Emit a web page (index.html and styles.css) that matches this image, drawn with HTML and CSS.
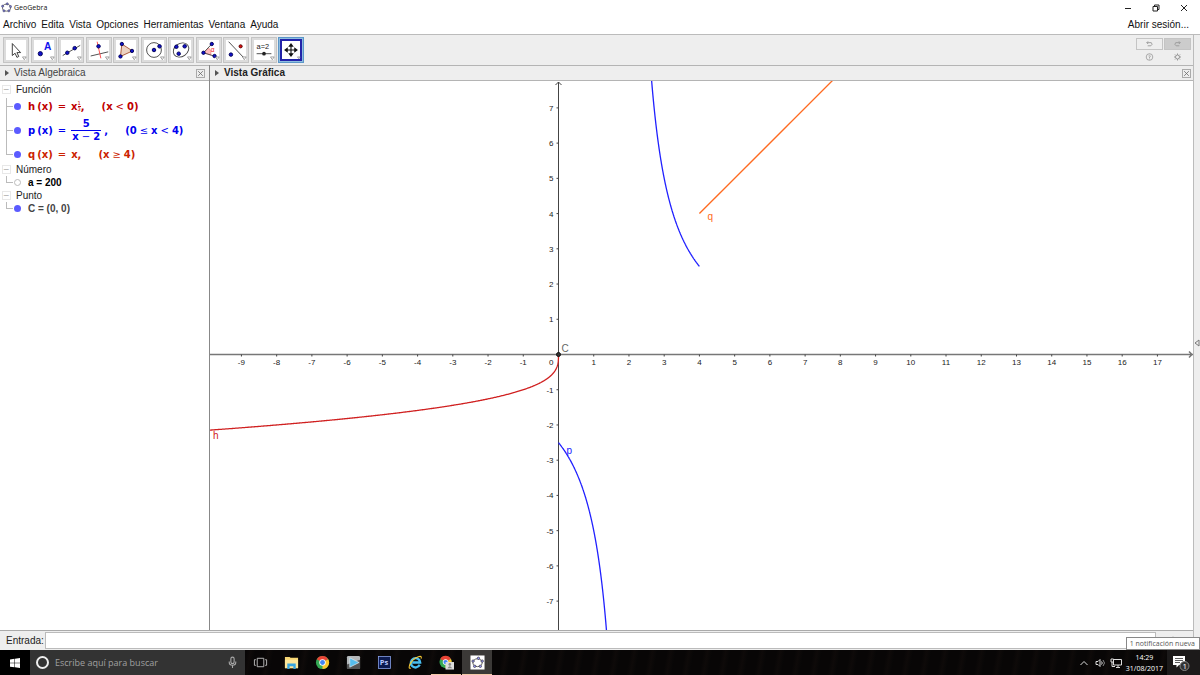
FILE: index.html
```html
<!DOCTYPE html>
<html lang="es">
<head>
  <meta charset="UTF-8">
  <title>GeoGebra</title>
  <link rel="stylesheet" href="styles.css">
</head>
<body>
  <header class="titulo">
    <svg class="logo" viewBox="0 0 12 12">
      <ellipse cx="6" cy="6.2" rx="4.4" ry="3.8" fill="none" stroke="#666"/>
      <g fill="#77c" stroke="#335" stroke-width=".5"><circle cx="6.8" cy="2" r="1.2"/><circle cx="1.8" cy="4.6" r="1.2"/><circle cx="3.2" cy="9.6" r="1.2"/><circle cx="8.6" cy="9.6" r="1.2"/><circle cx="10.4" cy="5" r="1.2"/></g>
    </svg>
    <span>GeoGebra</span>
    <div class="ventana">
      <button aria-label="Minimizar"><svg viewBox="0 0 8 8"><path d="M1 4.5h6"/></svg></button>
      <button aria-label="Restaurar"><svg viewBox="0 0 8 8"><path d="M1 2.5h4.5V7H1zM2.5 2.5V1H7v4.5H5.5"/></svg></button>
      <button aria-label="Cerrar"><svg viewBox="0 0 8 8"><path d="M1 1l6 6M7 1L1 7"/></svg></button>
    </div>
  </header>

  <nav class="menu">
    <a href="#">Archivo</a>
    <a href="#">Edita</a>
    <a href="#">Vista</a>
    <a href="#">Opciones</a>
    <a href="#">Herramientas</a>
    <a href="#">Ventana</a>
    <a href="#">Ayuda</a>
    <a href="#" class="sesion">Abrir sesión...</a>
  </nav>

  <div class="cuerpo">
    <main>
      <div class="barra">
        <div class="herramientas">
          <button aria-label="Elige y mueve"><svg viewBox="0 0 26 26"><path d="M9 6v13l3-2.500 2 4.500 2-1-2-4.200h4z" fill="#fff" stroke="#333"/><path class="mas" d="M20 20.500h4l-2 3z"/></svg></button>
          <button aria-label="Punto"><svg viewBox="0 0 26 26"><circle class="pt" cx="9" cy="17" r="2.300"/><text x="13" y="13" class="letra">A</text><path class="mas" d="M20 20.500h4l-2 3z"/></svg></button>
          <button aria-label="Recta"><svg viewBox="0 0 26 26"><path class="ln" d="M4 19L23 8"/><circle class="pt" cx="9" cy="16" r="1.900"/><circle class="pt" cx="17" cy="11" r="1.900"/><path class="mas" d="M20 20.500h4l-2 3z"/></svg></button>
          <button aria-label="Perpendicular"><svg viewBox="0 0 26 26"><path class="ln" d="M4 19.500L23 15"/><path d="M11 4l4 18" stroke="#f44"/><circle class="pt" cx="12.500" cy="9" r="1.900"/><path class="mas" d="M20 20.500h4l-2 3z"/></svg></button>
          <button aria-label="Polígono"><svg viewBox="0 0 26 26"><path d="M8.500 6.500L20 14 7 20z" fill="#ecd2c2" stroke="#a65332"/><circle class="pt" cx="8.500" cy="6.500" r="1.800"/><circle class="pt" cx="19.500" cy="14" r="1.800"/><circle class="pt" cx="7" cy="20" r="1.800"/><path class="mas" d="M20 20.500h4l-2 3z"/></svg></button>
          <button aria-label="Circunferencia"><svg viewBox="0 0 26 26"><circle cx="13" cy="13" r="8" class="ln"/><circle class="pt" cx="13" cy="13" r="1.900"/><circle class="pt" cx="19" cy="9" r="1.900"/><path class="mas" d="M20 20.500h4l-2 3z"/></svg></button>
          <button aria-label="Elipse"><svg viewBox="0 0 26 26"><ellipse cx="13" cy="13" rx="9" ry="7" transform="rotate(-35 13 13)" class="ln"/><circle class="pt" cx="8" cy="9.500" r="1.900"/><circle class="pt" cx="17" cy="9" r="1.900"/><circle class="pt" cx="10.500" cy="17" r="1.900"/><path class="mas" d="M20 20.500h4l-2 3z"/></svg></button>
          <button aria-label="Ángulo"><svg viewBox="0 0 26 26"><path d="M7 16l6-5a8 8 0 0 1 2 7.500z" fill="#fbb" stroke="#e66" stroke-width=".500"/><path class="ln" d="M16 6.500L7 16l13 4"/><text x="15" y="15" class="alfa">α</text><circle class="pt" cx="16" cy="6.500" r="1.800"/><circle class="pt" cx="7" cy="16" r="1.800"/><circle class="pt" cx="19" cy="19.500" r="1.800"/><path class="mas" d="M20 20.500h4l-2 3z"/></svg></button>
          <button aria-label="Simetría"><svg viewBox="0 0 26 26"><path class="ln" d="M5 4l17 18"/><circle class="pt" cx="7.500" cy="18" r="1.900"/><circle cx="18" cy="9" r="1.700" fill="#d11" stroke="#500"/><path class="mas" d="M20 20.500h4l-2 3z"/></svg></button>
          <button aria-label="Deslizador"><svg viewBox="0 0 26 26"><text x="5" y="12" class="valor">a=2</text><path class="ln" d="M5 17h16"/><circle cx="13" cy="17" r="2" fill="#222"/><path class="mas" d="M20 20.500h4l-2 3z"/></svg></button>
          <button class="activa" aria-label="Desplaza vista gráfica"><svg viewBox="0 0 26 26"><path d="M13 8v10M8 13h10" stroke="#111" stroke-width="1.200"/><path d="M13 5.500l3 4h-6zM13 20.500l3-4h-6zM5.500 13l4-3v6zM20.500 13l-4-3v6z" fill="#111"/><path class="mas" d="M20 20.500h3l-1.500 2z"/></svg></button>
        </div>
        <div class="acciones">
          <button aria-label="Deshace"><svg viewBox="0 0 10 8"><path d="M3.500 1L2 2.500 3.500 4M2 2.500h5q2 2-.500 3.500H3"/></svg></button>
          <button class="gris" aria-label="Rehace"><svg viewBox="0 0 10 8"><path d="M6.500 1L8 2.500 6.500 4M8 2.500H3q-2 2 .500 3.500H7"/></svg></button>
          <button class="plano" aria-label="Ayuda"><svg viewBox="0 0 8 8"><circle cx="4" cy="4" r="3.300" stroke-width=".800"/><path d="M3 3q1-1.500 2 0L4 4v1M4 5.500v1" stroke-width=".800"/></svg></button>
          <button class="plano" aria-label="Preferencias"><svg viewBox="0 0 8 8"><circle cx="4" cy="4" r="2"/><path d="M4 .500v1.500M4 6v1.500M.500 4H2M6 4h1.500M1.500 1.500l1 1M5.500 5.500l1 1M6.500 1.500l-1 1M2.500 5.500l-1 1"/></svg></button>
        </div>
      </div>

      <div class="vistas">
        <section class="algebra">
          <h2 class="cabecera"><span class="flecha"></span>Vista Algebraica
            <button class="cerrar" aria-label="Cerrar"><svg viewBox="0 0 9 9"><path d="M1.500 1.500l6 6M7.500 1.500l-6 6"/></svg></button>
          </h2>
          <ul class="arbol">
            <li><div class="grupo"><button aria-label="Contraer">−</button>Función</div>
              <ul>
                <li class="f h"><button class="bola" aria-label="Mostrar h"></button>
                  <span class="mat"><b>h<i></i>(x)</b><span class="op">=</span><b>x</b><span class="exp"><span>1</span><span>3</span></span><b>,</b></span>
                  <span class="cond"><b>(x</b><span>&lt;</span><b>0)</b></span></li>
                <li class="f p"><button class="bola" aria-label="Mostrar p"></button>
                  <span class="mat"><b>p<i></i>(x)</b><span class="op">=</span><span class="frac"><b>5</b><span><b>x</b> − <b>2</b></span></span><b>,</b></span>
                  <span class="cond"><b>(0</b><span>≤</span><b>x</b><span>&lt;</span><b>4)</b></span></li>
                <li class="f q"><button class="bola" aria-label="Mostrar q"></button>
                  <span class="mat"><b>q<i></i>(x)</b><span class="op">=</span><b>x,</b></span>
                  <span class="cond"><b>(x</b><span>≥</span><b>4)</b></span></li>
              </ul>
            </li>
            <li><div class="grupo"><button aria-label="Contraer">−</button>Número</div>
              <ul><li class="n"><button class="bola vacia" aria-label="Mostrar a"></button><b>a = 200</b></li></ul>
            </li>
            <li><div class="grupo"><button aria-label="Contraer">−</button>Punto</div>
              <ul><li class="n c"><button class="bola" aria-label="Mostrar C"></button><b>C = (0, 0)</b></li></ul>
            </li>
          </ul>
        </section>

        <section class="grafica">
          <h2 class="cabecera"><span class="flecha"></span><b>Vista Gráfica</b>
            <button class="cerrar" aria-label="Cerrar"><svg viewBox="0 0 9 9"><path d="M1.500 1.500l6 6M7.500 1.500l-6 6"/></svg></button>
          </h2>
          <div class="lienzo"><svg id="plano"></svg></div>
        </section>
      </div>

      <div class="entrada">
        <label for="entrada">Entrada:</label>
        <input type="text" id="entrada">
        <svg viewBox="0 0 10 10"><circle cx="5" cy="5" r="4"/></svg>
      </div>
    </main>
    <aside><button aria-label="Mostrar panel"><svg viewBox="0 0 6 8"><path d="M5 1v6L1 4z"/></svg></button></aside>
  </div>

  <footer class="tareas">
    <button class="inicio" aria-label="Inicio"><svg viewBox="0 0 12 12"><path d="M1 2.500l4.500-.700v4H1zM6 1.700l5-.700v4.800H6zM1 6.300h4.500v4L1 9.700zM6 6.300h5V11l-5-.700z" fill="#fff"/></svg></button>
    <div class="buscar">
      <span class="cortana"></span>
      <input type="text" aria-label="Buscar" placeholder="Escribe aquí para buscar">
      <svg viewBox="0 0 8 12"><rect x="2.500" y="1" width="3" height="6" rx="1.500"/><path d="M1 5v1q0 2.500 3 2.500T7 6V5M4 8.500V11"/></svg>
    </div>
    <div class="apps">
      <button aria-label="Vista de tareas"><svg viewBox="0 0 16 16"><path d="M4.500 3.500h7v9h-7zM3 5H1.500v6H3M13 5h1.500v6H13" fill="none" stroke="#bbb"/></svg></button>
      <button aria-label="Explorador"><svg viewBox="0 0 16 16"><path d="M1 2h5l1 1h8v11H1z" fill="#f7d774"/><path d="M1 5h14v9H1z" fill="#fde69a"/><path d="M3.500 15V9h9v6H10v-3H6v3z" fill="#38a5e0"/></svg></button>
      <button aria-label="Chrome"><svg viewBox="0 0 16 16"><circle cx="8" cy="8" r="7" fill="#34a853"/><path d="M8 8L1.900 4.500A7 7 0 0 1 14.100 4.500z" fill="#ea4335"/><path d="M8 8l6.100-3.500A7 7 0 0 1 8 15z" fill="#fbc52d"/><circle cx="8" cy="8" r="3.400" fill="#fff"/><circle cx="8" cy="8" r="2.600" fill="#4285f4"/></svg></button>
      <button aria-label="Reproductor"><svg viewBox="0 0 16 16"><rect x="1" y="1" width="14" height="14" rx="1.500" fill="#b4b8ba"/><path d="M1 10l14-5v10H1z" fill="#555"/><path d="M4 3l10 5-10 5z" fill="#56bdec" stroke="#eee" stroke-width=".700"/></svg></button>
      <button aria-label="Photoshop"><svg viewBox="0 0 16 16"><rect x="1.500" y="1.500" width="13" height="13" fill="#0b1a50" stroke="#8fa8f0" stroke-width=".800"/><text x="3" y="11" class="ps">Ps</text></svg></button>
      <button aria-label="Internet Explorer"><svg viewBox="0 0 16 16"><path d="M12.500 10.500A5 5 0 1 1 13 8H4.500" fill="none" stroke="#48bdf0" stroke-width="2.500"/><path d="M3 14q-3 1-1-4Q5 4 11 1.800q4-1.300 3 2" fill="none" stroke="#f7c934" stroke-width="1.200"/></svg></button>
      <button class="abierta" aria-label="Chrome abierto"><svg viewBox="0 0 16 16"><circle cx="7" cy="7.500" r="6.500" fill="#34a853"/><path d="M7 7.500L1.300 4.300A6.500 6.500 0 0 1 12.700 4.300z" fill="#ea4335"/><path d="M7 7.500l5.700-3.200A6.500 6.500 0 0 1 7 14z" fill="#fbc52d"/><circle cx="7" cy="7.500" r="3" fill="#fff"/><circle cx="7" cy="7.500" r="2.300" fill="#4285f4"/><rect x="7" y="7.500" width="9" height="8" fill="#ddd"/><circle cx="11.500" cy="10" r="1.400" fill="#888"/><path d="M9 14q2.500-4 5 0z" fill="#888"/></svg></button>
      <button class="abierta actual" aria-label="GeoGebra"><svg viewBox="0 0 16 16"><rect x=".500" y=".500" width="15" height="15" fill="#fff"/><ellipse cx="8" cy="8.200" rx="5" ry="4.200" fill="none" stroke="#555"/><g fill="#99f" stroke="#333" stroke-width=".700"><circle cx="9" cy="3.500" r="1.300"/><circle cx="3.300" cy="6.500" r="1.300"/><circle cx="5" cy="12" r="1.300"/><circle cx="11" cy="12" r="1.300"/><circle cx="13" cy="6.500" r="1.300"/></g></svg></button>
    </div>
    <div class="bandeja">
      <svg viewBox="0 0 12 12"><path d="M2.500 8L6 4.500 9.500 8"/></svg>
      <svg viewBox="0 0 12 12"><path d="M2 4.500h2L6 2.500v7L4 7.500H2zM7.500 4.500q1.500 1.500 0 3"/><path d="M9 3q3 3 0 6" stroke="#888"/></svg>
      <svg viewBox="0 0 12 12"><path d="M3.500 2.500h8v5.500h-8zM6 10.500h4M8 8v2.500M1 2h2.500v3H1zM2 5v4.500h3"/></svg>
      <time><span>14:29</span><span>31/08/2017</span></time>
      <button class="avisos" aria-label="Notificaciones"><svg viewBox="0 0 18 18"><path d="M1 2h12v9H7l-2.500 2.500V11H1z" fill="#fff"/><path d="M3 4.500h8M3 6.500h8M3 8.500h5" stroke="#333" stroke-width=".800"/><circle cx="12.500" cy="12" r="4.500" fill="#333" stroke="#888"/><text x="10.500" y="15" class="uno">1</text></svg></button>
    </div>
    <div class="globo">1 notificación nueva</div>
  </footer>

  <script src="script.js"></script>
</body>
</html>
```
FILE: styles.css
```css
* {
  box-sizing: border-box;
}
body {
  margin: 0;
  height: 100vh;
  display: flex;
  flex-direction: column;
  overflow: hidden;
  background: #fff;
  color: #222;
  font: 10px/12px "Liberation Sans", Arial, sans-serif;
}
button {
  margin: 0;
  padding: 0;
  border: none;
  background: none;
  font: inherit;
  color: inherit;
}
svg {
  display: block;
}
ul {
  list-style: none;
  margin: 0;
  padding: 0;
}

/* barra de título y menú */
.titulo {
  display: flex;
  align-items: center;
  gap: 2px;
  height: 15px;
  padding-left: 1px;
  font: 7px/15px "Open Sans", sans-serif;
  color: #111;
}
.logo {
  width: 11px;
  height: 11px;
}
.ventana {
  display: flex;
  gap: 20px;
  margin-left: auto;
  padding-right: 12px;
}
.ventana svg {
  width: 8px;
  height: 8px;
  fill: none;
  stroke: #222;
}
.menu {
  display: flex;
  align-items: center;
  gap: 5px;
  height: 19px;
  padding: 0 11px 0 3px;
}
.menu a {
  color: #111;
  text-decoration: none;
}
.menu .sesion {
  margin-left: auto;
}

.cuerpo {
  flex: 1;
  min-height: 0;
  display: flex;
  border-top: 1px solid #bbb;
  background: #eee;
}
main {
  flex: 1;
  min-width: 0;
  display: flex;
  flex-direction: column;
}
aside {
  width: 7px;
  display: flex;
  align-items: center;
  border-left: 1px solid #bbb;
}
aside svg {
  width: 6px;
  height: 8px;
  fill: none;
  stroke: #777;
}

/* herramientas */
.barra {
  display: flex;
  justify-content: space-between;
  align-items: center;
  height: 30px;
  padding: 0 2px 0 3px;
}
.herramientas {
  display: flex;
  justify-content: space-between;
  width: 301px;
}
.herramientas button {
  width: 26px;
  height: 26px;
  background: #fff;
  border: 1px solid #c4c4c4;
  box-shadow: inset 0 0 0 2px #dcdcdc;
}
.herramientas svg {
  width: 24px;
  height: 24px;
}
.herramientas .activa {
  border-color: #5b97c8;
  background: #fff;
  box-shadow: inset 0 0 0 1px #8fbde0, inset 0 0 0 3px #2222a8;
}
.ln {
  fill: none;
  stroke: #444;
}
.pt {
  fill: #11c;
  stroke: #005;
}
.mas {
  fill: #fff;
  stroke: #777;
  stroke-width: .7;
}
.letra {
  font-size: 11px;
  font-weight: bold;
  fill: #11e;
}
.alfa {
  font-size: 7px;
  fill: #e22;
}
.valor {
  font-size: 8px;
  fill: #222;
}
.acciones {
  display: grid;
  grid-template-columns: 27px 27px;
  grid-template-rows: 12px 12px;
  gap: 1px;
}
.acciones button {
  display: grid;
  place-items: center;
  border: 1px solid #c4c4c4;
}
.acciones .gris {
  background: #ccc;
}
.acciones .plano {
  border: none;
}
.acciones svg {
  width: 9px;
  height: 8px;
  fill: none;
  stroke: #999;
}

/* vistas */
.vistas {
  flex: 1;
  min-height: 0;
  display: flex;
}
.algebra {
  width: 210px;
  display: flex;
  flex-direction: column;
  border-right: 1px solid #888;
}
.grafica {
  flex: 1;
  min-width: 0;
  display: flex;
  flex-direction: column;
}
.cabecera {
  display: flex;
  align-items: center;
  height: 16px;
  margin: 0;
  padding: 0 2px 0 5px;
  border: solid #b4b4b4;
  border-width: 1px 0;
  font-size: 10px;
  font-weight: normal;
  color: #444;
}
.cabecera b {
  color: #222;
}
.flecha {
  width: 4px;
  margin-right: 5px;
  border: solid transparent;
  border-width: 3px 0 3px 4px;
  border-left-color: #555;
}
.cerrar {
  margin-left: auto;
  border: 1px solid #aaa;
}
.algebra .cerrar {
  margin-right: 2px;
}
.cerrar svg {
  width: 7px;
  height: 7px;
  stroke: #666;
}
.arbol {
  flex: 1;
  padding-left: 2px;
  background: #fff;
}
.grupo {
  display: flex;
  align-items: center;
  gap: 5px;
  height: 13px;
}
.arbol > li:first-child .grupo {
  height: 17px;
}
.grupo button {
  width: 9px;
  height: 9px;
  border: 1px solid #e8e8e8;
  line-height: 7px;
  color: #aaa;
}
.arbol ul {
  padding-left: 4px;
}
.arbol ul li {
  display: flex;
  align-items: center;
  height: 13px;
  background: linear-gradient(#bbb, #bbb) 0 50% / 7px 1px no-repeat, linear-gradient(#bbb, #bbb) 0 0 / 1px 100% no-repeat;
}
.arbol ul li:last-child {
  background-size: 7px 1px, 1px 50%;
}
.arbol ul .f {
  height: 17px;
  font-family: "DejaVu Sans", sans-serif;
}
.arbol ul .p {
  height: 31px;
}
.bola {
  width: 7px;
  height: 7px;
  margin: 0 7px 0 8px;
  border-radius: 50%;
  background: #5b5bff;
}
.vacia {
  background: #fff;
  border: 1px solid #bbb;
}
.n b {
  color: #000;
}
.c b {
  color: #444;
}
.h {
  color: #c00000;
}
.p {
  color: #0000f0;
}
.q {
  color: #cc2200;
}
.mat {
  display: flex;
  align-items: center;
}
.mat i {
  padding-left: 2px;
}
.op {
  margin: 0 5px;
}
.exp {
  display: flex;
  flex-direction: column;
  align-self: flex-start;
  font-size: 5px;
  line-height: 5px;
}
.exp span + span {
  border-top: 1px solid;
}
.frac {
  display: flex;
  flex-direction: column;
  align-items: center;
  margin-right: 3px;
}
.frac span {
  padding: 0 1px;
  border-top: 1px solid;
}
.cond {
  display: flex;
  gap: 3px;
  margin-left: 17px;
}
.lienzo {
  flex: 1;
  min-height: 0;
  background: #fff;
}
.lienzo svg {
  width: 100%;
  height: 100%;
}
.eje {
  stroke: #444;
  fill: none;
}
.horizontal {
  stroke: #777;
  stroke-width: 1.5;
}
.marca {
  font-size: 8px;
  fill: #222;
}
.nombre {
  font-size: 10px;
}
.curva {
  fill: none;
  stroke-width: 1.3;
}

/* entrada */
.entrada {
  display: flex;
  align-items: center;
  height: 20px;
  padding-left: 6px;
  border-top: 1px solid #aaa;
}
.entrada input {
  flex: 1;
  height: 17px;
  margin: 0 12px 0 1px;
  padding: 0 3px;
  border: 1px solid #bbb;
  background: #fff;
  font: inherit;
}
.entrada svg {
  width: 10px;
  height: 10px;
  margin-right: 15px;
  fill: none;
  stroke: #bbb;
}

/* barra de tareas */
.tareas {
  position: relative;
  display: flex;
  height: 25px;
  background: repeating-linear-gradient(100deg, #080606 0 9px, #0e0a09 13px, #070606 18px);
  color: #fff;
  font-family: "Open Sans", sans-serif;
}
.inicio {
  width: 30px;
  display: grid;
  place-items: center;
  background: #000;
}
.inicio svg {
  width: 12px;
  height: 12px;
}
.buscar {
  display: flex;
  align-items: center;
  gap: 6px;
  width: 215px;
  padding: 0 8px 0 6px;
  background: #333;
}
.cortana {
  width: 13px;
  height: 13px;
  border: 2px solid #eee;
  border-radius: 50%;
}
.buscar input {
  flex: 1;
  min-width: 0;
  padding: 0;
  border: none;
  background: none;
  color: #fff;
  font: 9px/12px "Open Sans", sans-serif;
}
.buscar input::placeholder {
  color: #a0a0a0;
}
.buscar svg {
  width: 9px;
  height: 13px;
  fill: none;
  stroke: #aaa;
}
.apps {
  display: flex;
  gap: 1px;
}
.apps button {
  width: 30px;
  display: grid;
  place-items: center;
  border: solid transparent;
  border-width: 1px 0;
}
.apps svg {
  width: 15px;
  height: 15px;
}
.apps .abierta {
  border-bottom-color: #f3c9a8;
}
.apps .actual {
  background: #3b3937;
}
.ps {
  font: bold 8px "Open Sans", sans-serif;
  fill: #b8c8ff;
}
.bandeja {
  display: flex;
  align-items: center;
  gap: 4px;
  margin-left: auto;
}
.bandeja > svg {
  width: 12px;
  height: 12px;
  fill: none;
  stroke: #ddd;
}
.bandeja time {
  display: flex;
  flex-direction: column;
  align-items: center;
  font-size: 7px;
  line-height: 11px;
}
.avisos {
  align-self: stretch;
  width: 33px;
  padding-right: 6px;
  display: grid;
  place-items: center;
  background: #1c1a1a;
}
.avisos svg {
  width: 18px;
  height: 18px;
}
.uno {
  font-size: 8px;
  fill: #fff;
}
.globo {
  position: absolute;
  right: 0;
  bottom: 25px;
  padding: 0 4px 0 3px;
  border: 1px solid #888;
  background: #fff;
  color: #555;
  font-size: 7px;
  line-height: 11px;
}
```
FILE: script.js
```javascript
const plano = document.getElementById("plano");
const unidad = 35.23;
const ox = 348.5;
const oy = 273.5;

function px(x) {
  return ox + x * unidad;
}

function py(y) {
  return oy - y * unidad;
}

function curva(f, desde, hasta, color) {
  const puntos = [];
  const pasos = 400;
  for (let i = 0; i <= pasos; i++) {
    const x = desde + (hasta - desde) * i / pasos;
    puntos.push(px(x).toFixed(2) + "," + py(f(x)).toFixed(2));
  }
  return `<polyline class="curva" points="${puntos.join(" ")}" stroke="${color}"/>`;
}

function texto(x, y, t, clase, ancla, color) {
  const relleno = color ? ` fill="${color}"` : "";
  return `<text x="${x}" y="${y}" class="${clase}" text-anchor="${ancla}"${relleno}>${t}</text>`;
}

function dibujar() {
  const w = plano.clientWidth;
  const h = plano.clientHeight;
  let s = `<path class="eje horizontal" d="M0 ${oy}H${w}M${w - 4} ${oy - 3}l3 3l-3 3"/>`;
  s += `<path class="eje" d="M${ox} ${h}V1M${ox - 3} 4l3 -3l3 3"/>`;

  // marcas de los ejes
  for (let n = Math.ceil(-ox / unidad); px(n) < w - 10; n++) {
    if (n === 0) continue;
    s += `<path class="eje" d="M${px(n)} ${oy}v2"/>`;
    s += texto(px(n), oy + 10, n, "marca", "middle");
  }
  for (let n = Math.ceil((oy - h) / unidad); py(n) > 10; n++) {
    if (n === 0) continue;
    s += `<path class="eje" d="M${ox} ${py(n)}h-2"/>`;
    s += texto(ox - 5, py(n) + 3, n, "marca", "end");
  }
  s += texto(ox - 5, oy + 10, "0", "marca", "end");

  // funciones
  s += curva(x => -Math.pow(-x, 1 / 3), -ox / unidad, -0.5, "#d02020");
  s += curva(x => -Math.pow(-x, 1 / 3), -0.5, 0, "#d02020");
  s += curva(x => 5 / (x - 2), 0, 1.5, "#2020ff");
  s += curva(x => 5 / (x - 2), 2.5, 4, "#2020ff");
  s += `<path class="curva" d="M${px(4)} ${py(4)}L${px(9)} ${py(9)}" stroke="#ff6a20"/>`;
  s += `<circle cx="${ox}" cy="${oy}" r="2" fill="#333" stroke="#111"/>`;

  s += texto(3, 358, "h", "nombre", "start", "#d02020");
  s += texto(ox + 8, 373, "p", "nombre", "start", "#2020ff");
  s += texto(px(4) + 8, 139, "q", "nombre", "start", "#ff6a20");
  s += texto(ox + 3, oy - 3, "C", "nombre", "start", "#666");
  plano.innerHTML = s;
}

window.addEventListener("resize", dibujar);
dibujar();
```
